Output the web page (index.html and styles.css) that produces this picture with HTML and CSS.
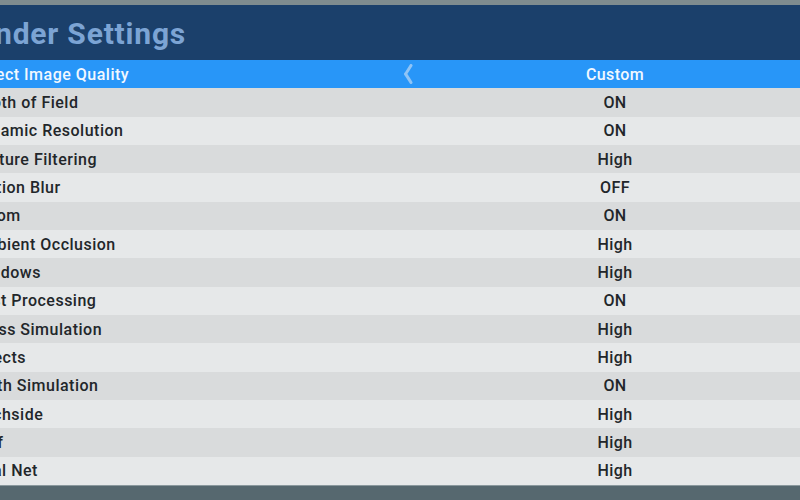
FILE: index.html
```html
<!DOCTYPE html>
<html lang="en">
<head>
    <meta charset="UTF-8">
    <title>Render Settings</title>
    <link rel="stylesheet" href="styles.css">
</head>
<body>
    <div class="screen">
        <div class="header">
            <h1 class="title">Render Settings</h1>
        </div>
        <div class="settings-list">
            <div class="setting-row selected">
                <span class="label">Select Image Quality</span>
                <span class="arrow">
                    <svg width="10" height="20" viewBox="0 0 10 20">
                        <path d="M8 1.5 Q4 8 2.5 10 Q4 12 8 18.5" fill="none" stroke="#8fc4f6" stroke-width="3" stroke-linecap="round" stroke-linejoin="round"/>
                    </svg>
                </span>
                <span class="value">Custom</span>
            </div>
            <div class="setting-row"><span class="label">Depth of Field</span><span class="arrow"></span><span class="value">ON</span></div>
            <div class="setting-row"><span class="label">Dynamic Resolution</span><span class="arrow"></span><span class="value">ON</span></div>
            <div class="setting-row"><span class="label">Texture Filtering</span><span class="arrow"></span><span class="value">High</span></div>
            <div class="setting-row"><span class="label">Motion Blur</span><span class="arrow"></span><span class="value">OFF</span></div>
            <div class="setting-row"><span class="label">Bloom</span><span class="arrow"></span><span class="value">ON</span></div>
            <div class="setting-row"><span class="label">Ambient Occlusion</span><span class="arrow"></span><span class="value">High</span></div>
            <div class="setting-row"><span class="label">Shadows</span><span class="arrow"></span><span class="value">High</span></div>
            <div class="setting-row"><span class="label">Post Processing</span><span class="arrow"></span><span class="value">ON</span></div>
            <div class="setting-row"><span class="label">Grass Simulation</span><span class="arrow"></span><span class="value">High</span></div>
            <div class="setting-row"><span class="label">Effects</span><span class="arrow"></span><span class="value">High</span></div>
            <div class="setting-row"><span class="label">Cloth Simulation</span><span class="arrow"></span><span class="value">ON</span></div>
            <div class="setting-row"><span class="label">Pitchside</span><span class="arrow"></span><span class="value">High</span></div>
            <div class="setting-row"><span class="label">Turf</span><span class="arrow"></span><span class="value">High</span></div>
            <div class="setting-row"><span class="label">Goal Net</span><span class="arrow"></span><span class="value">High</span></div>
        </div>
        <div class="footer"></div>
    </div>
</body>
</html>
```

FILE: styles.css
```css
* {
    margin: 0;
    padding: 0;
    box-sizing: border-box;
}

body {
    font-family: Roboto, "Noto Sans", sans-serif;
    background-color: #56686f;
    overflow: hidden;
}

.screen {
    width: 800px;
    height: 500px;
    display: flex;
    flex-direction: column;
}

.header {
    height: 60px;
    background: #1b406b;
    border-top: 5px solid #7f8c8f;
    display: flex;
    align-items: center;
    padding-top: 2px;
}

.title {
    margin-left: -42px;
    font-size: 30px;
    font-weight: 700;
    color: #7ca4d4;
    letter-spacing: 0.8px;
}

.settings-list {
    height: 425px;
    display: grid;
    grid-template-rows: repeat(15, 1fr);
}

.setting-row {
    display: grid;
    grid-template-columns: 400px 30px 370px;
    align-items: center;
    font-size: 16px;
    font-weight: 500;
    color: #22262a;
    background: #e6e8e9;
    white-space: nowrap;
}

.setting-row:nth-child(even) {
    background: #d9dbdc;
}

.setting-row.selected {
    background: #2896f8;
    color: #f2f8ff;
}

.label {
    margin-left: -28px;
    letter-spacing: 0.5px;
}

.arrow {
    padding-left: 3px;
    display: flex;
    align-items: center;
}

.value {
    text-align: center;
    letter-spacing: 0.4px;
}

.footer {
    flex: 1;
    background: #56686f;
    border-top: 1px solid #8a989d;
}
```
